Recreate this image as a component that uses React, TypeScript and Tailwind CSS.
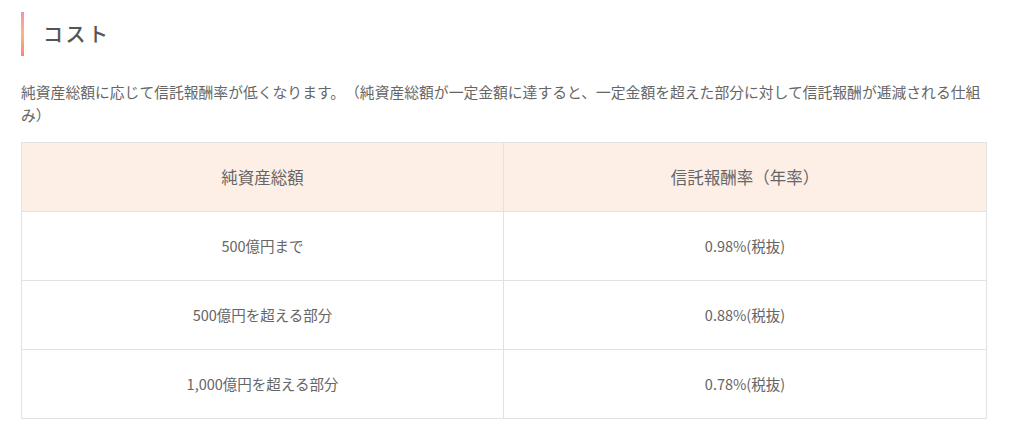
import React from "react";

const rows = [
  ["500億円まで", "0.98%(税抜)"],
  ["500億円を超える部分", "0.88%(税抜)"],
  ["1,000億円を超える部分", "0.78%(税抜)"],
];

export default function App() {
  return (
    <div
      className="w-[1024px] h-[443px] bg-white px-[21px] pt-[12px] text-[#666] [text-spacing-trim:space-all]"
      style={{ fontFamily: '"Noto Sans CJK JP", "Noto Sans", sans-serif' }}
    >
      <div className="flex items-center h-[44px]">
        <div className="w-[3px] h-[44px] bg-gradient-to-b from-[#f38fae] via-[#f9b784] to-[#f3877a]" />
        <h2 className="ml-[19px] text-[20px] font-medium tracking-[2.5px] text-[#555] leading-none">コスト</h2>
      </div>
      <p className="mt-[24px] text-[14.8px] leading-[23px]">
        純資産総額に応じて信託報酬率が低くなります。（純資産総額が一定金額に達すると、一定金額を超えた部分に対して信託報酬が逓減される仕組み）
      </p>
      <table className="mt-[16px] w-[966px] border-collapse table-fixed">
        <thead>
          <tr className="h-[69px] bg-[#fdefe6]">
            <th className="w-[482px] border border-[#e2e2e2] font-normal text-center text-[16.5px]">純資産総額</th>
            <th className="border border-[#e2e2e2] font-normal text-center text-[16.5px]">信託報酬率（年率）</th>
          </tr>
        </thead>
        <tbody>
          {rows.map((r) => (
            <tr key={r[0]} className="h-[69px]">
              <td className="border border-[#e2e2e2] text-center text-[14.5px]">{r[0]}</td>
              <td className="border border-[#e2e2e2] text-center text-[14.5px]">{r[1]}</td>
            </tr>
          ))}
        </tbody>
      </table>
    </div>
  );
}
